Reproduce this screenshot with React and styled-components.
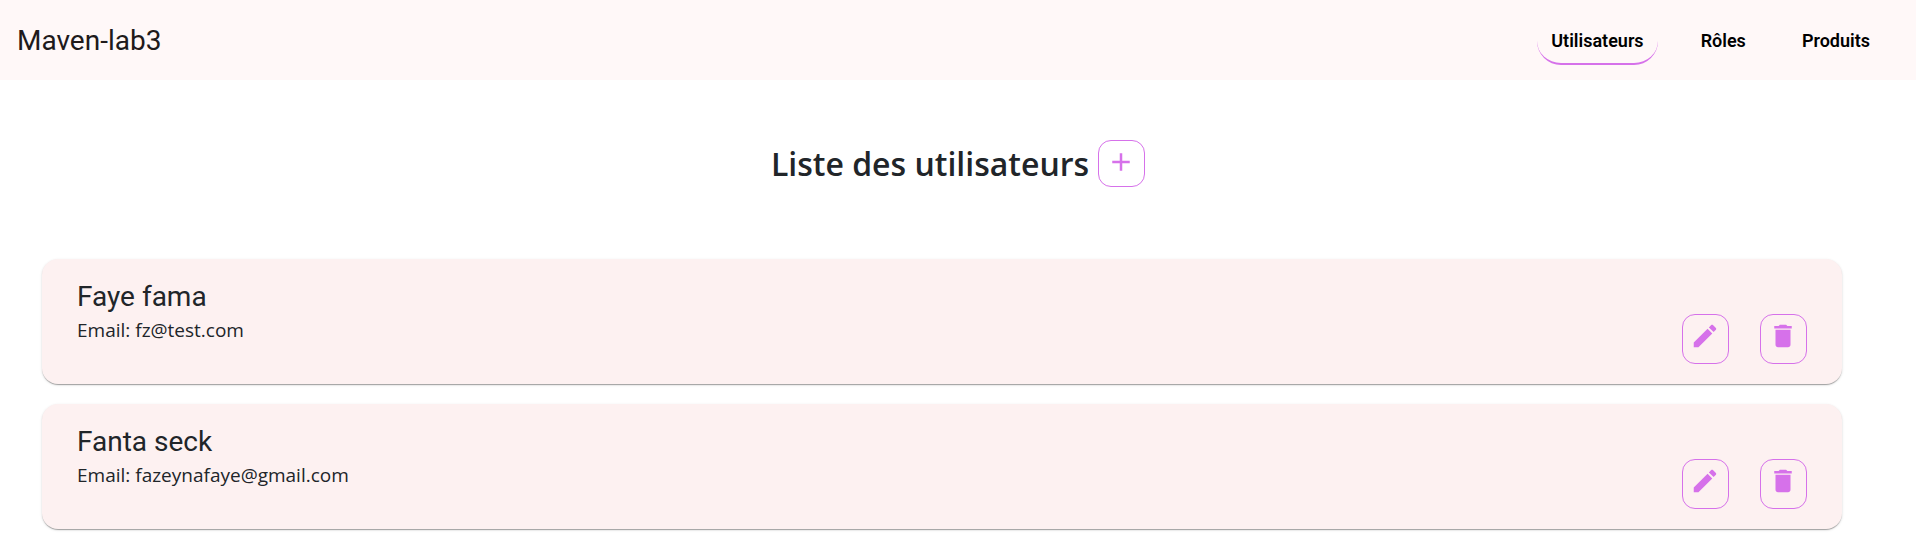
import React from "react";
import styled, { createGlobalStyle } from "styled-components";

const GlobalStyle = createGlobalStyle`
  *, *::before, *::after { box-sizing: border-box; }
  body {
    margin: 0;
    background: #fff;
    color: #212529;
    font-family: "Segoe UI", "Open Sans", "Noto Sans", sans-serif;
  }
`;

const Toolbar = styled.header`
  display: flex;
  align-items: center;
  justify-content: space-between;
  height: 80px;
  padding: 2px 33px 0 17px;
  background: #fff8f8;
  font-family: Roboto, sans-serif;
`;

const Brand = styled.span`
  font-size: 28px;
  line-height: 32px;
  color: #201a1b;
`;

const Nav = styled.nav`
  display: flex;
  align-items: center;
  gap: 30px;
`;

const NavLink = styled.a`
  height: 48px;
  padding: 0 ${({ $active }) => ($active ? "14px" : "13px")};
  border-bottom: ${({ $active }) => ($active ? "2px solid #d671ea" : "0")};
  border-radius: 25px;
  color: #000;
  font-size: 18px;
  font-weight: 600;
  line-height: 48px;
  text-decoration: none;
`;

const TitleRow = styled.div`
  display: flex;
  align-items: center;
  justify-content: center;
  gap: 9px;
  padding: 60px 0 72px;
`;

const Title = styled.h1`
  margin: 0;
  font-size: 32px;
  font-weight: 600;
  line-height: 44px;
`;

const IconButton = styled.button`
  display: flex;
  width: 47px;
  height: ${({ $tall }) => ($tall ? "50px" : "47px")};
  padding: 6px 8px 0 7px;
  border: 1px solid #d671ea;
  border-radius: 13px;
  background: transparent;
  color: #d671ea;
  cursor: pointer;
`;

const CardList = styled.ul`
  display: flex;
  flex-direction: column;
  gap: 20px;
  margin: 0;
  padding: 0 74px 28px 42px;
  list-style: none;
`;

const Card = styled.li`
  display: flex;
  align-items: flex-start;
  justify-content: space-between;
  padding: 20px 35px;
  border-radius: 16px;
  background: #fdf1f1;
  box-shadow: 0 2px 1px -1px rgba(0, 0, 0, 0.2),
    0 1px 1px 0 rgba(0, 0, 0, 0.14), 0 1px 3px 0 rgba(0, 0, 0, 0.12);
`;

const Name = styled.h2`
  margin: 0;
  font-family: Roboto, sans-serif;
  font-size: 28px;
  font-weight: 400;
  line-height: 36px;
`;

const Email = styled.p`
  margin: 0;
  font-size: 19px;
  line-height: 30px;
`;

const Actions = styled.div`
  display: flex;
  gap: 31px;
  padding-top: 35px;
`;

const ICONS = {
  add: "M19 13h-6v6h-2v-6H5v-2h6V5h2v6h6v2z",
  edit: "M3 17.25V21h3.75L17.81 9.94l-3.75-3.75L3 17.25zM20.71 7.04c.39-.39.39-1.02 0-1.41l-2.34-2.34c-.39-.39-1.02-.39-1.41 0l-1.83 1.83 3.75 3.75 1.83-1.83z",
  remove: "M6 19c0 1.1.9 2 2 2h8c1.1 0 2-.9 2-2V7H6v12zM19 4h-3.5l-1-1h-5l-1 1H5v2h14V4z",
};

const Icon = ({ name }) => (
  <svg width="30" height="30" viewBox="0 0 24 24" fill="currentColor" aria-hidden="true">
    <path d={ICONS[name]} />
  </svg>
);

const links = ["Utilisateurs", "Rôles", "Produits"];

const users = [
  { name: "Faye fama", email: "fz@test.com" },
  { name: "Fanta seck", email: "fazeynafaye@gmail.com" },
];

export default function App() {
  return (
    <>
      <GlobalStyle />
      <Toolbar>
        <Brand>Maven-lab3</Brand>
        <Nav>
          {links.map((label, i) => (
            <NavLink key={label} href="#" $active={i === 0}>
              {label}
            </NavLink>
          ))}
        </Nav>
      </Toolbar>
      <main>
        <TitleRow>
          <Title>Liste des utilisateurs</Title>
          <IconButton type="button" aria-label="Ajouter">
            <Icon name="add" />
          </IconButton>
        </TitleRow>
        <CardList>
          {users.map((user) => (
            <Card key={user.email}>
              <div>
                <Name>{user.name}</Name>
                <Email>Email: {user.email}</Email>
              </div>
              <Actions>
                <IconButton type="button" aria-label="Modifier" $tall>
                  <Icon name="edit" />
                </IconButton>
                <IconButton type="button" aria-label="Supprimer" $tall>
                  <Icon name="remove" />
                </IconButton>
              </Actions>
            </Card>
          ))}
        </CardList>
      </main>
    </>
  );
}
